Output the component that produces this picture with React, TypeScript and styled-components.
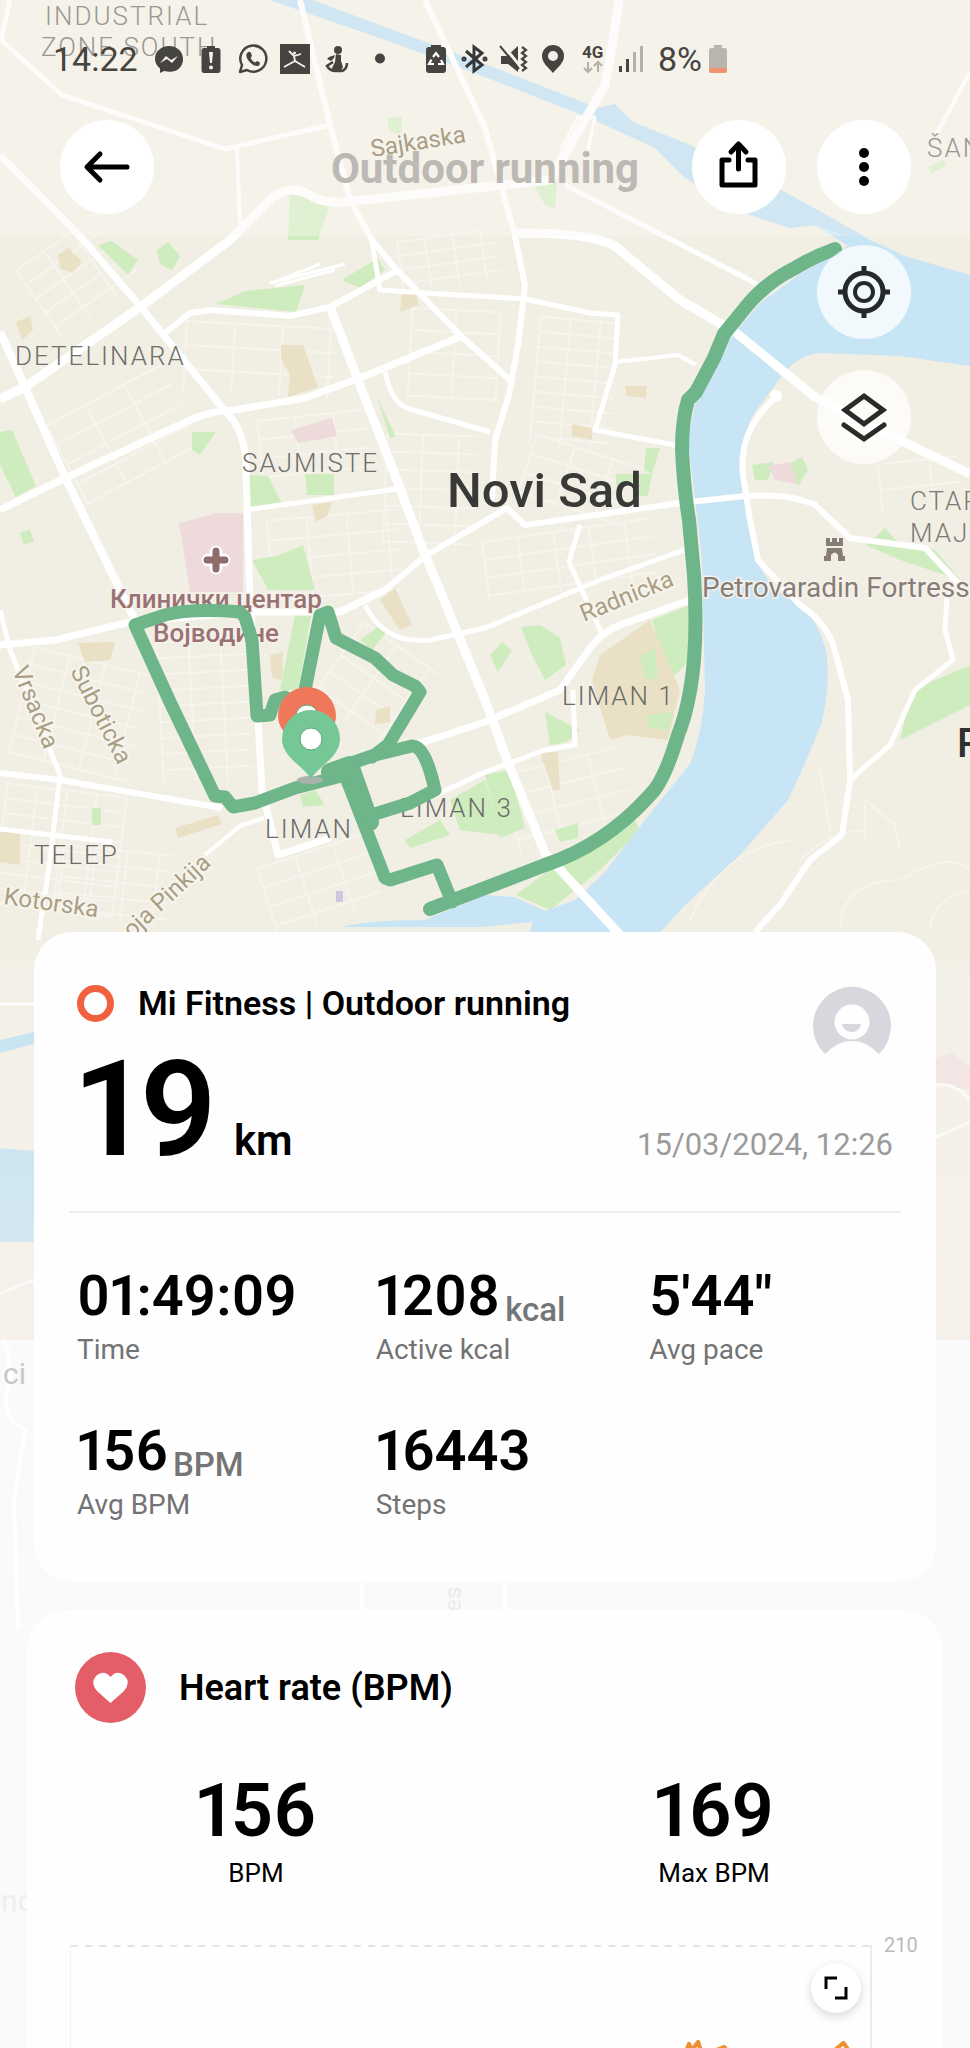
import React from "react";
import styled, { createGlobalStyle } from "styled-components";

const GlobalStyle = createGlobalStyle`
  *, *::before, *::after { box-sizing: border-box; }
  body { margin: 0; background: #fafafa; font-family: Roboto, "Liberation Sans", sans-serif; color: #000; }
  h1, h2, p, dl, dd, dt { margin: 0; }
`;

/* ---------- page shell ---------- */

const Page = styled.main`
  position: relative;
  display: flex;
  flex-direction: column;
  min-height: 100vh;
  overflow: hidden;
`;

const MapSvg = styled.svg`
  position: absolute;
  inset: 0;
  width: 100%;
  height: 100%;
  z-index: 0;
`;

const Hero = styled.div`
  position: relative;
  min-height: 932px;
`;

const StatusBar = styled.div`
  display: flex;
  align-items: center;
  height: 120px;
  padding: 0 53px 2px;
  color: #464441;
`;

const StatusText = styled.span<{ $width: number }>`
  width: ${(p) => p.$width}px;
  font-size: 34px;
  line-height: 40px;
`;

const IconGroup = styled.div<{ $gap: number; $after: number }>`
  display: flex;
  gap: ${(p) => p.$gap}px;
  margin-right: ${(p) => p.$after}px;
  svg { display: block; width: 30px; height: 30px; }
`;

const BatteryIcon = styled.svg`
  display: block;
  width: 18px;
  height: 28px;
`;

const AppBar = styled.header`
  position: relative;
  display: flex;
  align-items: center;
  justify-content: flex-end;
  gap: 31px;
  padding: 0 59px 0 60px;
`;

const Title = styled.h1`
  position: absolute;
  inset: 0;
  text-align: center;
  font-size: 42px;
  line-height: 98px;
  font-weight: 700;
  color: #bcb9b4;
`;

const RoundButton = styled.button<{ $translucent?: boolean; $lead?: boolean }>`
  position: relative;
  display: grid;
  place-items: center;
  width: 94px;
  height: 94px;
  padding: 0;
  border: 0;
  border-radius: 50%;
  background: ${(p) => (p.$translucent ? "rgba(255,255,255,0.75)" : "#fff")};
  margin-right: ${(p) => (p.$lead ? "auto" : "0")};
  svg { display: block; width: 54px; height: 54px; }
`;

const MapTools = styled.div`
  position: relative;
  display: flex;
  flex-direction: column;
  align-items: flex-end;
  gap: 31px;
  padding: 31px 59px 0;
`;

/* ---------- cards ---------- */

const SummaryCard = styled.section`
  position: relative;
  margin: 0 34px;
  padding: 47px 35px 0;
  min-height: 650px;
  border-radius: 38px;
  background: #fefefe;
`;

const SummaryTop = styled.div`
  display: flex;
  justify-content: space-between;
  padding: 0 10px 0 8px;
`;

const SourceRow = styled.div`
  display: flex;
  align-items: center;
  gap: 24px;
  height: 48px;
`;

const Ring = styled.span`
  width: 37px;
  height: 37px;
  border: 7px solid #f0623f;
  border-radius: 50%;
`;

const CardTitle = styled.h2<{ $size: number }>`
  font-size: ${(p) => p.$size}px;
  line-height: 48px;
  font-weight: 600;
`;

const Avatar = styled.svg`
  display: block;
  width: 78px;
  height: 78px;
  margin-top: 7px;
`;

const DistanceRow = styled.div`
  display: flex;
  align-items: baseline;
  height: 120px;
  margin-top: -14px;
  padding: 0 8px;
`;

const Distance = styled.span`
  font-size: 134px;
  line-height: 120px;
  font-weight: 600;
  font-variant-numeric: proportional-nums;
`;

const DistanceUnit = styled.span`
  margin-left: 16px;
  font-size: 42px;
  font-weight: 600;
`;

const DateText = styled.time`
  margin-left: auto;
  font-size: 31px;
  color: #9b9b9b;
`;

const Divider = styled.hr`
  height: 2px;
  margin: 41px 0 0;
  border: 0;
  background: #ececec;
`;

const Stats = styled.dl`
  display: grid;
  grid-template-columns: 299fr 274fr 244fr;
  row-gap: 42px;
  padding: 44px 8px 56px;
`;

const Stat = styled.div`
  display: flex;
  flex-direction: column-reverse;
`;

const StatValue = styled.dd`
  height: 73px;
  font-size: 56px;
  line-height: 78px;
  font-weight: 600;
  font-variant-numeric: proportional-nums;
  white-space: nowrap;
`;

const StatUnit = styled.small`
  position: relative;
  top: 6px;
  margin-left: 5px;
  font-size: 33px;
  font-weight: 500;
  color: #757575;
`;

const StatLabel = styled.dt`
  font-size: 28px;
  line-height: 40px;
  color: #737373;
`;

const HeartCard = styled.section`
  position: relative;
  flex: 1;
  display: flex;
  flex-direction: column;
  margin: 28px 27px 0;
  padding-top: 42px;
  border-radius: 40px 40px 0 0;
  background: #fefefe;
`;

const HeartHead = styled.div`
  display: flex;
  align-items: center;
  gap: 33px;
  padding: 0 48px;
  svg { display: block; width: 71px; height: 71px; }
`;

const HeartStats = styled.dl`
  display: grid;
  grid-template-columns: 1fr 1fr;
  padding-top: 43px;
  text-align: center;
`;

const HeartValue = styled.dd`
  font-size: 74px;
  line-height: 90px;
  font-weight: 600;
  font-variant-numeric: proportional-nums;
`;

const HeartLabel = styled.dt`
  font-size: 26px;
  line-height: 34px;
`;

const ChartRow = styled.div`
  flex: 1;
  display: flex;
  gap: 12px;
  min-height: 102px;
  margin-top: 55px;
  padding: 0 24px 0 43px;
`;

const Plot = styled.div`
  position: relative;
  flex: 1;
  border-left: 1px solid #f1f1f1;
  border-right: 2px solid #ebebeb;
`;

const PlotSvg = styled.svg`
  position: absolute;
  inset: 0;
  width: 100%;
  height: 100%;
`;

const AxisLabel = styled.span`
  width: 35px;
  margin-top: -13px;
  font-size: 20px;
  line-height: 26px;
  color: #bababa;
`;

const ExpandButton = styled.button`
  position: absolute;
  top: 18px;
  right: 9px;
  display: grid;
  place-items: center;
  width: 50px;
  height: 50px;
  padding: 0;
  border: 0;
  border-radius: 50%;
  background: #fff;
  box-shadow: 0 3px 10px rgba(0, 0, 0, 0.16);
`;

/* ---------- map data ---------- */

const ROADS: [string, number][] = [
  ["M10 0L1 40L62 95L225 149L330 125", 5],
  ["M237 147L240 225", 4],
  ["M0 155L80 236L140 306L225 411Q246 430 246 470L250 600L258 720L262 790L278 855L330 838", 7],
  ["M0 399L25 387L143 305L230 240L272 198Q290 184 308 194Q322 204 345 202L485 187L550 180L605 85Q612 50 619 0", 9],
  ["M300 0L330 125L350 200L372 240L395 268L460 335L510 380", 6],
  ["M425 0L485 128L505 200L515 236L525 285L518 345L509 395L495 440L492 500", 6],
  ["M372 242L380 290L425 293L525 299L590 313L618 315L615 365L595 430L680 446", 5],
  ["M513 233Q590 232 615 246L680 300L735 332L815 397L900 440L970 474", 9],
  ["M565 185L672 240L757 284", 5],
  ["M615 362L678 355L696 365", 4],
  ["M0 510L65 478L190 420Q210 411 235 410L305 398L360 378L462 336", 7],
  ["M0 332L25 387L65 477L120 590L135 620", 8],
  ["M165 333L190 313L210 310L290 316L330 307L398 270", 6],
  ["M330 307L358 380L395 475L425 555L442 595L485 700L507 760L545 853L620 935", 9],
  ["M245 510L397 489", 5],
  ["M385 372Q392 405 410 409L490 432", 5],
  ["M385 590L425 556L507 508L525 525L680 503L745 496Q790 493 815 505L850 538L925 548L960 585", 6],
  ["M580 525L569 562L603 636", 5],
  ["M0 645L55 640L130 622L250 612L340 612L385 590", 7],
  ["M0 773L60 780L222 808", 6],
  ["M0 610L10 650L60 775L50 860L38 940", 5],
  ["M0 829L112 842", 5],
  ["M205 855L240 826L264 818", 4],
  ["M365 605Q385 645 430 640L485 628L600 580L690 548", 5],
  ["M355 760L430 740L485 722L560 690L590 648Q602 632 620 625L690 600", 7],
  ["M425 800L485 772L545 750L575 745L573 690", 5],
  ["M776 397Q738 430 743 475L750 520L758 560L800 605Q830 625 836 655L848 700L850 780L842 835L810 860L780 905L755 932", 6],
  ["M947 598L945 630L953 660L915 690L890 745L850 780", 5],
  ["M970 72L937 133", 4],
];

const GREEN = "#cfecbf";
const TAN = "#eae0c5";
const PINK = "#eedadb";

const AREAS: [string, string][] = [
  [GREEN, "216,304 245,291 305,285 296,312"],
  [GREEN, "98,245 112,241 138,260 128,275"],
  [GREEN, "157,250 168,242 180,256 172,270 160,264"],
  [GREEN, "342,280 378,258 385,270 360,288"],
  [GREEN, "0,432 12,430 36,486 16,497 0,465"],
  [GREEN, "20,533 30,529 34,541 24,545"],
  [GREEN, "249,475 268,476 282,503 249,507"],
  [GREEN, "305,474 334,474 334,495 307,495"],
  [GREEN, "252,560 280,555 303,545 315,590 268,590"],
  [GREEN, "376,395 396,437 390,438 378,400"],
  [GREEN, "192,432 216,432 200,455 192,450"],
  [GREEN, "296,610 312,610 298,690 280,690"],
  [GREEN, "290,193 330,205 318,240 288,240"],
  [GREEN, "532,182 557,182 555,208 545,205"],
  [GREEN, "387,118 402,117 402,134 390,132"],
  [GREEN, "928,167 944,159 946,165 931,174"],
  [GREEN, "616,474 652,474 648,496 638,496 634,480 616,486"],
  [GREEN, "646,448 660,448 652,474 644,470"],
  [GREEN, "866,545 885,528 900,545 935,550 960,580 900,560"],
  [GREEN, "752,465 774,462 768,480 755,480"],
  [GREEN, "790,463 802,457 808,470 798,486 790,475"],
  [GREEN, "521,627 540,625 560,638 566,665 545,680 532,655"],
  [GREEN, "490,655 502,642 512,650 498,672"],
  [GREEN, "485,775 510,770 525,828 500,838"],
  [GREEN, "450,800 485,780 500,835 460,830"],
  [GREEN, "652,620 690,605 690,660 670,680"],
  [GREEN, "545,712 580,730 567,742 550,745"],
  [GREEN, "555,830 578,823 578,838 560,842"],
  [GREEN, "516,895 560,862 635,820 640,830 600,870 550,910"],
  [GREEN, "900,740 912,690 970,665 970,705"],
  [GREEN, "405,840 440,820 450,835 410,848"],
  [GREEN, "300,795 315,790 325,805 303,807"],
  [GREEN, "92,808 101,808 101,825 92,825"],
  [GREEN, "360,640 380,625 388,630 372,650"],
  [TAN, "281,345 303,345 318,387 288,397 290,375 281,358"],
  [TAN, "58,255 68,248 82,262 72,273 60,268"],
  [TAN, "16,322 30,316 33,330 22,340"],
  [TAN, "402,295 416,291 418,305 400,312"],
  [TAN, "625,386 647,386 646,398 626,396"],
  [TAN, "572,424 592,428 592,440 572,436"],
  [TAN, "78,643 115,642 110,660 85,662"],
  [TAN, "600,655 650,620 680,690 668,740 628,735 610,740 592,680"],
  [TAN, "540,753 558,752 560,790 553,790"],
  [TAN, "175,828 218,815 222,824 178,838"],
  [TAN, "0,832 20,832 20,865 0,862"],
  [TAN, "380,600 395,588 412,625 400,630"],
  [TAN, "270,655 283,652 282,680 272,678"],
  [TAN, "376,710 390,706 390,722 375,724"],
  [TAN, "312,505 332,502 328,515 316,522"],
  [GREEN, "640,655 655,648 658,678 645,680"],
  [GREEN, "646,715 672,712 670,730 648,728"],
  [PINK, "291,430 332,418 337,436 298,443"],
  [PINK, "179,523 218,513 243,513 243,592 190,592 182,540"],
  [PINK, "768,466 790,462 798,484 775,480"],
  [PINK, "936,1058 952,1053 970,1067 970,1090 936,1085"],
];

/* Blocks of side streets: origin, size, rotation and spacing. */
const STREETS = [
  { x: 30, y: 235, w: 100, h: 80, a: -35, s: 17 },
  { x: 60, y: 390, w: 130, h: 90, a: -28, s: 22 },
  { x: 185, y: 325, w: 150, h: 70, a: 3, s: 24 },
  { x: 260, y: 415, w: 110, h: 60, a: -6, s: 19 },
  { x: 385, y: 435, w: 90, h: 110, a: 2, s: 18 },
  { x: 270, y: 515, w: 130, h: 80, a: -5, s: 20 },
  { x: 410, y: 310, w: 90, h: 90, a: 3, s: 22 },
  { x: 535, y: 320, w: 80, h: 130, a: 5, s: 15 },
  { x: 400, y: 235, w: 100, h: 50, a: -8, s: 14 },
  { x: 525, y: 450, w: 110, h: 60, a: 18, s: 20 },
  { x: 485, y: 530, w: 170, h: 60, a: -8, s: 18 },
  { x: 160, y: 640, w: 90, h: 140, a: -3, s: 16 },
  { x: 20, y: 660, w: 120, h: 110, a: 14, s: 18 },
  { x: 330, y: 640, w: 90, h: 90, a: 35, s: 20 },
  { x: 510, y: 760, w: 120, h: 80, a: -14, s: 22 },
  { x: 60, y: 850, w: 110, h: 70, a: 6, s: 16 },
  { x: 0, y: 790, w: 120, h: 120, a: 7, s: 15 },
  { x: 265, y: 850, w: 110, h: 70, a: -18, s: 20 },
  { x: 880, y: 460, w: 80, h: 50, a: -6, s: 26 },
];

const streetPath = (w: number, h: number, s: number) => {
  let d = "";
  for (let y = 0; y <= h; y += s) d += `M0 ${y}H${w}`;
  for (let x = 0; x <= w; x += s * 2) d += `M${x} 0V${h}`;
  return d;
};

const RIVERSIDE_TRACK =
  "M835 249Q815 256 795 268Q765 283 745 308L724 334L714 358L696 392L688 400Q682 420 682 450Q684 490 689 520L694 575Q697 620 694 660Q690 705 678 735Q664 782 650 795Q605 845 545 865L485 888L430 909";

const CITY_TRACK =
  "M452 902L437 865L390 880L385 878L345 775" +
  "M345 775L362 818L410 803L435 790Q425 745 412 746L375 755L340 767" +
  "M372 757L388 745L420 692L415 686L393 675L375 658L336 638L328 612L320 615L305 690" +
  "M285 697L275 700L270 715L257 716L252 640L245 617L240 612Q190 608 165 615L135 625L170 702L215 796L225 797L233 807L255 803L295 788L345 775";

const DISTRICT_LABELS: [number, number, string, string][] = [
  [45, 25, "INDUSTRIAL", "#9b9893"],
  [41, 56, "ZONE SOUTH", "#9b9893"],
  [15, 365, "DETELINARA", "#6f6e6b"],
  [242, 472, "SAJMISTE", "#6f6e6b"],
  [910, 510, "СТАРИ", "#7d7a76"],
  [910, 542, "МАЈУР", "#7d7a76"],
  [562, 705, "LIMAN 1", "#6b6b69"],
  [400, 817, "LIMAN 3", "#6b6b69"],
  [265, 838, "LIMAN", "#6b6b69"],
  [34, 864, "TELEP", "#6b6b69"],
  [927, 157, "ŠANAC", "#999692"],
];

const STREET_LABELS: [number, number, number, string][] = [
  [372, 157, -9, "Sajkaska"],
  [584, 622, -22, "Radnicka"],
  [12, 670, 68, "Vrsacka"],
  [70, 671, 63, "Suboticka"],
  [3, 904, 8, "Kotorska"],
  [132, 939, -43, "oja Pinkija"],
];

const Pin = ({ x, y, fill }: { x: number; y: number; fill: string }) => (
  <g transform={`translate(${x} ${y})`}>
    <path d="M0 41C-5 28 -29 19 -29 0A29 29 0 1 1 29 0C29 19 5 28 0 41Z" fill={fill} />
    <circle r="11" fill="#fff" stroke="#55a77a" strokeWidth="1" />
  </g>
);

const CityMap = () => (
  <MapSvg viewBox="0 0 970 2048" preserveAspectRatio="xMidYMin slice" aria-hidden="true">
    <defs>
      <linearGradient id="haze" x1="0" y1="0" x2="0" y2="1">
        <stop offset="0" stopColor="#fafafa" stopOpacity="0" />
        <stop offset="0.2" stopColor="#f8f4f0" stopOpacity="0.4" />
        <stop offset="1" stopColor="#f8f4f0" stopOpacity="0.6" />
      </linearGradient>
    </defs>
    <rect width="970" height="2048" fill="#f1eee3" />
    <g stroke="#f7f4ed" strokeWidth="2" fill="none">
      {STREETS.map((b, i) => (
        <path key={i} transform={`translate(${b.x} ${b.y}) rotate(${b.a} ${b.w / 2} ${b.h / 2})`} d={streetPath(b.w, b.h, b.s)} />
      ))}
      <path d="M840 932Q840 880 900 880Q950 850 970 870M800 860Q830 830 870 830M865 840V800L895 825L900 850M820 770L830 830M710 590L715 650M690 920Q720 850 790 840M930 932Q930 900 970 890" />
    </g>
    {AREAS.map(([fill, points], i) => (
      <polygon key={i} points={points} fill={fill} />
    ))}
    <path d="M270 0H312L485 64L598 108L615 104L633 122L690 145L785 192L870 240L905 256L970 275V366L900 356L820 353Q800 355 785 372L755 412Q738 440 742 490L750 520L755 560L775 590L802 605Q818 622 826 650Q831 680 822 722Q805 765 788 800L740 855L685 905L658 935H528L533 922L480 927H340Q370 920 425 920L485 895L515 897L545 911L575 900L605 872L645 820L690 764Q703 730 705 690L702 560L688 440L696 400L722 348L760 303L800 274L848 246L815 225L790 228L750 215L685 178L655 148L590 118L485 77L400 45Z" fill="#c8e5f5" />
    <path d="M270 0H312L485 64L598 108L615 104L633 122L690 145L785 192L864 236H845L815 225L790 228L750 215L685 178L655 148L590 118L485 77L400 45Z" fill="#b4dcf3" />
    <path d="M0 1040L34 1032V1044L0 1053ZM0 1148L34 1151V1242H0Z" fill="#a8d9f2" />
    <g fill="none" stroke="#fff" strokeLinejoin="round">
      {ROADS.map(([d, w], i) => (
        <path key={i} d={d} strokeWidth={w} />
      ))}
      <path d="M270 283L345 264M275 286L335 270M280 280L320 264M0 1004H34M0 1293L34 1280M936 1085Q955 1082 970 1100M936 1137L970 1122" strokeWidth="3" />
      <path d="M560 150L578 117H595L588 150" strokeWidth="3" />
    </g>
    <circle cx="776" cy="396" r="6" fill="#fff" />
    <rect width="970" height="236" fill="#fbf8f2" opacity="0.4" />
    <rect y="932" width="970" height="408" fill="url(#haze)" />
    <g fontSize="26" fontFamily="Roboto" letterSpacing="2" fontWeight="300">
      {DISTRICT_LABELS.map(([x, y, text, fill], i) => (
        <text key={i} x={x} y={y} fill={fill}>{text}</text>
      ))}
    </g>
    <g fontSize="24" fontFamily="Roboto" fill="#a99e83" stroke="#f6f4ec" strokeWidth="4" paintOrder="stroke">
      {STREET_LABELS.map(([x, y, a, text], i) => (
        <text key={i} transform={`translate(${x} ${y}) rotate(${a})`}>{text}</text>
      ))}
    </g>
    <g fontFamily="Roboto" fontWeight="500">
      <text x="447" y="507" fontSize="49" fill="#393937">Novi Sad</text>
      <text x="957" y="757" fontSize="40" fill="#2f2f2e">Petrovaradin</text>
      <g stroke="#f7f2ec" strokeWidth="3" paintOrder="stroke">
        <text x="702" y="597" fontSize="28" fontWeight="400" fill="#877d77">Petrovaradin Fortress</text>
        <text x="110" y="608" fontSize="26" fill="#997373">Клинички центар</text>
        <text x="153" y="642" fontSize="26" fill="#997373">Војводине</text>
      </g>
    </g>
    <path d="M216 552V568M208 560H224" stroke="#fff" strokeWidth="13" strokeLinecap="round" />
    <path d="M216 551V569M207 560H225" stroke="#916a6a" strokeWidth="7" strokeLinecap="round" />
    <path d="M826 538H830V542H832V538H837V542H839V538H843V546H826ZM827 548H842L843 556H845V561H838V555Q835 550 831 555V561H824V556H826Z" fill="#877d77" />
    <rect x="336" y="891" width="7" height="11" fill="#cfc6e2" />
    <g fill="none" stroke="#6fb58a" strokeLinecap="round" strokeLinejoin="round">
      <path d={RIVERSIDE_TRACK} strokeWidth="14" />
      <path d={CITY_TRACK} strokeWidth="13" />
      <path d="M330 772L350 765L370 822" strokeWidth="18" />
    </g>
    <Pin x={307} y={716} fill="#f0785a" />
    <ellipse cx="310" cy="780" rx="13" ry="4" fill="#a9b3ad" />
    <Pin x={311} y={739} fill="#75c795" />
    <rect y="1340" width="970" height="708" fill="#fafafa" />
    <path d="M3 1340Q14 1355 6 1400Q6 1420 25 1430L14 1500L18 1630M362 1583V1610M505 1583V1610" fill="none" stroke="#fff" strokeWidth="4" />
    <text x="3" y="1384" fontFamily="Roboto" fontSize="30" fill="#c9c8c6">ci</text>
    <text x="-16" y="1911" fontFamily="Roboto" fontSize="30" fill="#efefee">ond</text>
    <text transform="translate(461 1612) rotate(-90)" fontFamily="Roboto" fontSize="24" fill="#ebebe9">es</text>
  </MapSvg>
);

/* ---------- status icons ---------- */

const StatusIcons = () => (
  <IconGroup $gap={12} $after={27}>
    <svg viewBox="0 0 30 30"><path d="M15 2C7 2 1 7.500 1 15C1 19 3 22 6 24.500V29L10 27C23 30 29 23 29 15C29 7.500 23 2 15 2Z" fill="#464441" /><path d="M6 19L12 12L17 16L24 12L18 19L13 15Z" fill="#f6f4ec" /></svg>
    <svg viewBox="0 0 30 30"><path d="M11 2H19V4H22Q24.500 4 24.500 7V26Q24.500 29 22 29H8Q5.500 29 5.500 26V7Q5.500 4 8 4H11Z" fill="#464441" /><path d="M13 8H17L16 19H14Z" fill="#f6f4ec" /><circle cx="15" cy="23.500" r="2" fill="#f6f4ec" /></svg>
    <svg viewBox="0 0 30 30" fill="none" stroke="#464441"><path d="M2 28L4 21A13 13 0 1 1 9 26Z" strokeWidth="2.500" strokeLinejoin="round" /><path d="M10 8Q12 7 13 9L14 12L12.500 14Q14 17 17 18.500L19 17L22 18.500Q22 21 20 22C15 23 7 15 8.500 10Z" fill="#464441" stroke="none" /></svg>
    <svg viewBox="0 0 30 30"><rect width="30" height="30" fill="#464441" /><circle cx="14.500" cy="9" r="1.500" fill="#f6f4ec" /><path d="M9 7L14 12L21 10M14 12L15 17M4 23L15 17L25 23" stroke="#f6f4ec" strokeWidth="1.800" fill="none" /></svg>
    <svg viewBox="0 0 30 30"><circle cx="16" cy="6" r="4" fill="#464441" /><path d="M14 10L19 11L19 17L21 23L18 28H11L10 24L13 18ZM13 11L7 13L5 15L9 17L12 14Z" fill="#464441" /><path d="M11 18L5 22Q8 27 14 27H20Q25 25 25 19" fill="none" stroke="#464441" strokeWidth="2.500" /></svg>
    <svg viewBox="0 0 30 30"><circle cx="16" cy="14.500" r="5" fill="#464441" /></svg>
  </IconGroup>
);

const RadioIcons = () => (
  <IconGroup $gap={9} $after={12}>
    <svg viewBox="0 0 30 30"><path d="M10 1H20V3H22Q25 3 25 6V26Q25 29 22 29H8Q5 29 5 26V6Q5 3 8 3H10Z" fill="#464441" /><path d="M12 13L15 9L18 13M20 16L22 20H17M13 20H8L10.500 15.500" stroke="#fff" strokeWidth="2.200" fill="none" /></svg>
    <svg viewBox="0 0 30 30" fill="none" stroke="#34383a" strokeWidth="3"><path d="M6 7L22 21L14 27V3L22 9L6 23" /><circle cx="4" cy="15" r="1" /><circle cx="25" cy="15" r="1" /></svg>
    <svg viewBox="0 0 30 30"><path d="M2 12H8L19 2V28L9 20H2Z" fill="#464441" /><path d="M3 0L21 22" stroke="#f6f4ec" strokeWidth="3" /><path d="M1 2L20 25" stroke="#464441" strokeWidth="2" /><path d="M23 3L27 6L23 9L27 12L23 15L27 18L23 21L27 24L23 27" fill="none" stroke="#464441" strokeWidth="2.200" /></svg>
    <svg viewBox="0 0 30 30"><path fillRule="evenodd" d="M15 1A11 11 0 0 0 4 12C4 19 10 23 15 29C20 23 26 19 26 12A11 11 0 0 0 15 1ZM15 7A5 5 0 1 1 15 17A5 5 0 0 1 15 7Z" fill="#464441" /></svg>
    <svg viewBox="0 0 30 30"><text x="5" y="14" fontSize="17" fontWeight="700" fontFamily="Roboto" fill="#464441">4G</text><path d="M11 18V27M7 24L11 28L15 24M21 28V19M17 22L21 18L25 22" stroke="#b3b0aa" strokeWidth="2" fill="none" /></svg>
    <svg viewBox="0 0 30 30"><path d="M3 22H6V28H3ZM10 15H13V28H10Z" fill="#464441" /><path d="M17 8H20V28H17ZM24 2H27V28H24Z" fill="#b3b0aa" /></svg>
  </IconGroup>
);

const STATS = [
  { label: "Time", value: "01:49:09" },
  { label: "Active kcal", value: "1208", unit: "kcal" },
  { label: "Avg pace", value: "5'44\"" },
  { label: "Avg BPM", value: "156", unit: "BPM" },
  { label: "Steps", value: "16443" },
];

export default function App() {
  return (
    <Page>
      <GlobalStyle />
      <CityMap />
      <Hero>
        <StatusBar>
          <StatusText $width={101}>14:22</StatusText>
          <StatusIcons />
          <RadioIcons />
          <StatusText $width={51}>8%</StatusText>
          <BatteryIcon viewBox="0 0 18 28">
            <path d="M5 0H13V3H16Q18 3 18 6V23H0V6Q0 3 2 3H5Z" fill="#b8b5ae" />
            <path d="M0 23H18V26Q18 28 16 28H2Q0 28 0 26Z" fill="#ee9272" />
          </BatteryIcon>
        </StatusBar>
        <AppBar>
          <Title>Outdoor running</Title>
          <RoundButton $lead aria-label="Back">
            <svg viewBox="0 0 54 54" fill="none" stroke="#000" strokeWidth="5" strokeLinecap="round" strokeLinejoin="round"><path d="M47 27H8M20 14L7 27L20 40" /></svg>
          </RoundButton>
          <RoundButton aria-label="Share">
            <svg viewBox="0 0 54 54" fill="none" stroke="#000" strokeWidth="5" strokeLinecap="round" strokeLinejoin="round"><path d="M17 20H10V45H43V20H36" /><path d="M26.500 29V6M19 12L26.500 4L34 12" /></svg>
          </RoundButton>
          <RoundButton aria-label="More options">
            <svg viewBox="0 0 54 54"><circle cx="27" cy="13" r="5" /><circle cx="27" cy="27" r="5" /><circle cx="27" cy="41" r="5" /></svg>
          </RoundButton>
        </AppBar>
        <MapTools>
          <RoundButton $translucent aria-label="My location">
            <svg viewBox="0 0 54 54" fill="none" stroke="#25292b" strokeWidth="5"><circle cx="27" cy="27" r="19" /><circle cx="27" cy="27" r="9" strokeWidth="4" /><path d="M27 1V9M27 45V53M1 27H9M45 27H53" /></svg>
          </RoundButton>
          <RoundButton $translucent aria-label="Map layers">
            <svg viewBox="0 0 54 54" fill="none" stroke="#2b2a29" strokeWidth="5"><path d="M27 6L46 20L27 34L8 20Z" /><path d="M7 35L27 49L47 35" strokeLinecap="round" /></svg>
          </RoundButton>
        </MapTools>
      </Hero>

      <SummaryCard>
        <SummaryTop>
          <SourceRow>
            <Ring />
            <CardTitle $size={34}>Mi Fitness | Outdoor running</CardTitle>
          </SourceRow>
          <Avatar viewBox="0 0 78 78" role="img" aria-label="Profile">
            <path d="M12 68A39 39 0 1 1 66 68Q54 55 39 55Q24 55 12 68Z" fill="#d8d7de" />
            <circle cx="39" cy="36" r="17.500" fill="#fefefe" />
            <path d="M29 38H48Q46 46 38.500 46Q31 46 29 38Z" fill="#d8d7de" />
          </Avatar>
        </SummaryTop>
        <DistanceRow>
          <Distance>19</Distance>
          <DistanceUnit>km</DistanceUnit>
          <DateText dateTime="2024-03-15T12:26">15/03/2024, 12:26</DateText>
        </DistanceRow>
        <Divider />
        <Stats>
          {STATS.map((s) => (
            <Stat key={s.label}>
              <StatLabel>{s.label}</StatLabel>
              <StatValue>
                {s.value}
                {s.unit && <StatUnit>{s.unit}</StatUnit>}
              </StatValue>
            </Stat>
          ))}
        </Stats>
      </SummaryCard>

      <HeartCard>
        <HeartHead>
          <svg viewBox="0 0 71 71"><circle cx="35.500" cy="35.500" r="35.500" fill="#e45e68" /><path d="M35.500 51L22 39Q15 31 21 24Q29 17 35.500 25Q42 17 50 24Q56 31 49 39Z" fill="#fff" /></svg>
          <CardTitle $size={36}>Heart rate (BPM)</CardTitle>
        </HeartHead>
        <HeartStats>
          <Stat>
            <HeartLabel>BPM</HeartLabel>
            <HeartValue>156</HeartValue>
          </Stat>
          <Stat>
            <HeartLabel>Max BPM</HeartLabel>
            <HeartValue>169</HeartValue>
          </Stat>
        </HeartStats>
        <ChartRow>
          <Plot>
            <PlotSvg viewBox="0 0 800 102" preserveAspectRatio="xMinYMin slice" aria-hidden="true">
              <path d="M0 1H800" stroke="#e4e4e4" strokeWidth="2" strokeDasharray="7 7" />
              <path d="M616 108L620 98L623 104L629 96L633 108M642 106L655 101L660 108M762 106L768 101L773 97L778 104" transform="translate(-8 0)" fill="none" stroke="#ee8f33" strokeWidth="4" strokeLinejoin="round" />
            </PlotSvg>
            <ExpandButton aria-label="Expand chart">
              <svg width="24" height="24" viewBox="0 0 24 24" fill="none" stroke="#000" strokeWidth="3"><path d="M13 2H2V13M11 22H22V11" /></svg>
            </ExpandButton>
          </Plot>
          <AxisLabel>210</AxisLabel>
        </ChartRow>
      </HeartCard>
    </Page>
  );
}
